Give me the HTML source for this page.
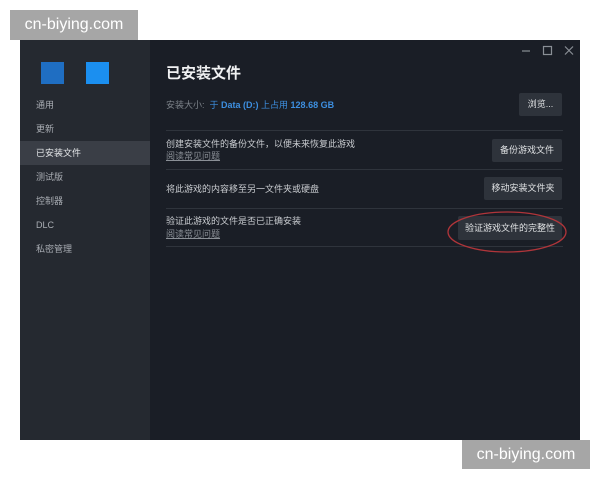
<!DOCTYPE html>
<html><head><meta charset="utf-8"><style>
body{margin:0;width:600px;height:480px;background:#fff;position:relative;overflow:hidden;font-family:"Liberation Sans","Noto Sans CJK SC",sans-serif}
.a{position:absolute}
#win{left:20px;top:40px;width:560px;height:400px;background:#1a1e26}
#side{left:20px;top:40px;width:130px;height:400px;background:#252930}
.nav{position:absolute;left:36px;font-size:9px;color:#a9adb3;line-height:12px}
.t{font-size:9px;color:#c9ccd0;line-height:12px}
.l{font-size:9px;color:#8a8f96;text-decoration:underline;line-height:12px}
.sep{position:absolute;left:166px;width:397px;height:1px;background:#2f343c}
.btn{position:absolute;background:#2e333b;color:#dfe1e3;font-size:9px;text-align:center;border-radius:2px}
.wm{position:absolute;background:#a6a6a6;color:#fff;font-size:16px;text-align:center}
</style></head><body>
<div class="a" id="win"></div>
<div class="a" id="side"></div>
<div class="a" style="left:41px;top:62px;width:23px;height:22px;background:#1f6ec2"></div>
<div class="a" style="left:86px;top:62px;width:23px;height:22px;background:#1b8ff0"></div>
<div class="a" style="left:20px;top:141px;width:130px;height:24px;background:#3a3e46"></div>
<div class="nav" style="top:99px">通用</div>
<div class="nav" style="top:123px">更新</div>
<div class="nav" style="top:147px;color:#e6e8ea">已安装文件</div>
<div class="nav" style="top:171px">测试版</div>
<div class="nav" style="top:195px">控制器</div>
<div class="nav" style="top:219px">DLC</div>
<div class="nav" style="top:243px">私密管理</div>
<svg class="a" style="left:520px;top:44px" width="60" height="14" fill="none" stroke="#8a8f96" stroke-width="1.2">
<path d="M2 7H10"/><rect x="23.5" y="2.5" width="8" height="8"/><path d="M45 2.5L53 10.5M53 2.5L45 10.5"/></svg>
<div class="a" style="left:166px;top:62px;font-size:15px;font-weight:bold;color:#f0f1f2">已安装文件</div>
<div class="a t" style="left:166px;top:99px;color:#7d838a">安装大小: <span style="color:#3d8fe0">&nbsp;于 <b>Data (D:)</b> 上占用 <b>128.68 GB</b></span></div>
<div class="btn" style="left:519px;top:93px;width:43px;height:23px;line-height:23px">浏览...</div>
<div class="sep" style="top:130px"></div>
<div class="a t" style="left:166px;top:138px">创建安装文件的备份文件，以便未来恢复此游戏</div>
<div class="a l" style="left:166px;top:150px">阅读常见问题</div>
<div class="btn" style="left:492px;top:139px;width:70px;height:23px;line-height:23px">备份游戏文件</div>
<div class="sep" style="top:169px"></div>
<div class="a t" style="left:166px;top:183px">将此游戏的内容移至另一文件夹或硬盘</div>
<div class="btn" style="left:484px;top:177px;width:78px;height:23px;line-height:23px">移动安装文件夹</div>
<div class="sep" style="top:208px"></div>
<div class="a t" style="left:166px;top:215px">验证此游戏的文件是否已正确安装</div>
<div class="a l" style="left:166px;top:228px">阅读常见问题</div>
<div class="btn" style="left:458px;top:216px;width:104px;height:24px;line-height:24px">验证游戏文件的完整性</div>
<div class="sep" style="top:246px"></div>
<svg class="a" style="left:0;top:0" width="600" height="480"><ellipse cx="507" cy="232" rx="59" ry="20" fill="none" stroke="#b0353a" stroke-width="1.3"/></svg>
<div class="wm" style="left:10px;top:10px;width:128px;height:30px;line-height:30px">cn-biying.com</div>
<div class="wm" style="left:462px;top:440px;width:128px;height:29px;line-height:29px">cn-biying.com</div>
</body></html>
